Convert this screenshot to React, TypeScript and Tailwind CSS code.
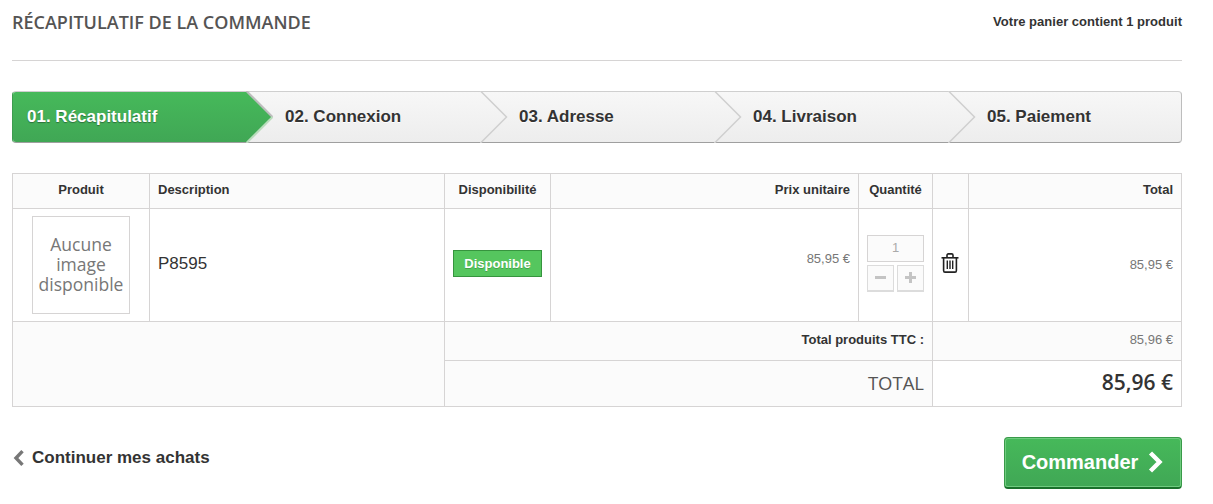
import React from 'react';

const steps = ['01. Récapitulatif', '02. Connexion', '03. Adresse', '04. Livraison', '05. Paiement'];

const th = 'border border-[#d6d4d4] bg-[#fbfbfb] h-[35px] px-2 pb-[2px] text-[13px] font-bold text-[#333]';
const td = 'border border-[#d6d4d4] px-2 align-middle';

function TrashIcon() {
  return (
    <svg width="18" height="20" viewBox="0 0 18 20" fill="none" stroke="#222" strokeWidth="1.6">
      <path d="M0.5 4.8H17.5" />
      <path d="M6 4.5V2.2C6 1.4 6.6 0.9 7.3 0.9H10.7C11.4 0.9 12 1.4 12 2.2V4.5" />
      <path d="M2.6 4.8V17.4C2.6 18.4 3.2 19.1 4 19.1H14C14.8 19.1 15.4 18.4 15.4 17.4V4.8" />
      <path d="M6.3 7.6V16M9 7.6V16M11.7 7.6V16" strokeWidth="1.4" />
    </svg>
  );
}

function StepChevron({ active }: { active: boolean }) {
  return (
    <svg className="absolute top-[-1px] left-[233px] z-10" width="28" height="52" viewBox="0 0 28 52" fill="none">
      {active ? (
        <>
          <path d="M0 0.5L26 26L0 51.5Z" fill="url(#stepGreen)" />
          <path d="M0.5 0L26.5 26" stroke="#bdbdbd" strokeWidth="2" />
          <path d="M26.5 26L0.5 52" stroke="#b9dcbc" strokeWidth="2" />
        </>
      ) : (
        <>
          <path d="M0 0L26 26L0 52Z" fill="url(#stepGrey)" />
          <path d="M0.5 0L26.5 26L0.5 52" stroke="#cfcfcf" strokeWidth="1.5" />
        </>
      )}
      <defs>
        <linearGradient id="stepGreen" x1="0" y1="0" x2="0" y2="1">
          <stop offset="0" stopColor="#46b95a" />
          <stop offset="1" stopColor="#40a755" />
        </linearGradient>
        <linearGradient id="stepGrey" x1="0" y1="0" x2="0" y2="1">
          <stop offset="0" stopColor="#f7f7f7" />
          <stop offset="1" stopColor="#ededed" />
        </linearGradient>
      </defs>
    </svg>
  );
}

export default function App() {
  return (
    <div className="w-[1213px] h-[504px] overflow-hidden bg-white pl-3 pr-[31px] font-['Liberation_Sans',Arial,sans-serif] text-[#333]">
      <div className="flex h-[61px] justify-between border-b border-[#d6d4d4] pt-[10px]">
        <h1 className="font-['Open_Sans',sans-serif] text-[18px] leading-[24px] font-semibold text-[#555454] uppercase">
          Récapitulatif de la commande
        </h1>
        <span className="pt-[3px] text-[13px] leading-[18px] font-bold tracking-[0.02px] text-[#333]">Votre panier contient 1 produit</span>
      </div>

      <ul className="mt-[30px] flex h-[52px] w-[1170px] rounded-[4px] border-x border-t border-b border-t-[#cfcfcf] border-r-[#bdbdbd] border-b-[#9f9f9f] border-l-[#3d9c4f] bg-gradient-to-b from-[#f7f7f7] to-[#ededed]">
        {steps.map((label, i) => (
          <li
            key={label}
            className={
              i === 0
                ? 'relative flex w-[234px] items-center rounded-l-[3px] bg-gradient-to-b from-[#46b95a] to-[#40a755] pl-[14px] text-[17px] font-bold text-white [text-shadow:0_1px_1px_rgba(0,0,0,0.35)]'
                : i === 4
                  ? 'relative flex flex-1 items-center pl-[38px] text-[17px] font-bold text-[#333] [text-shadow:0_1px_0_#fff]'
                  : 'relative flex w-[234px] items-center pl-[38px] text-[17px] font-bold text-[#333] [text-shadow:0_1px_0_#fff]'
            }
          >
            {label}
            {i < 4 && <StepChevron active={i === 0} />}
          </li>
        ))}
      </ul>

      <table className="mt-[30px] w-[1169px] table-fixed border-collapse">
        <colgroup>
          <col className="w-[137px]" />
          <col className="w-[295px]" />
          <col className="w-[106px]" />
          <col className="w-[308px]" />
          <col className="w-[74px]" />
          <col className="w-[36px]" />
          <col className="w-[213px]" />
        </colgroup>
        <thead>
          <tr>
            <th className={`${th} text-center`}>Produit</th>
            <th className={`${th} text-left`}>Description</th>
            <th className={`${th} text-center`}>Disponibilité</th>
            <th className={`${th} text-right`}>Prix unitaire</th>
            <th className={`${th} text-center`}>Quantité</th>
            <th className={th}></th>
            <th className={`${th} text-right`}>Total</th>
          </tr>
        </thead>
        <tbody>
          <tr className="h-[113px]">
            <td className={td}>
              <div className="mx-auto flex h-[98px] w-[98px] items-center justify-center border border-[#d6d4d4] pb-[3px] text-center font-['Open_Sans',sans-serif] text-[17.5px] leading-[20px] text-[#777]">
                Aucune
                <br />
                image
                <br />
                disponible
              </div>
            </td>
            <td className={`${td} pb-[2px] text-[17px] text-[#333]`}>P8595</td>
            <td className={`${td} pb-[4px] text-center`}>
              <span className="inline-block h-[27px] w-[89px] border border-[#36943e] bg-[#55c65e] text-[13px] leading-[25px] font-bold text-white [text-shadow:0_1px_0_rgba(0,0,0,0.2)]">
                Disponible
              </span>
            </td>
            <td className={`${td} pb-[12px] text-right text-[13px] text-[#777]`}>85,95 €</td>
            <td className={`${td} pb-[4px]`}>
              <div className="flex h-[27px] w-[57px] items-center justify-center border border-[#d6d4d4] bg-[#fbfbfb] text-[13px] text-[#aaa]">1</div>
              <div className="mt-[3px] flex w-[57px] justify-between">
                <span className="flex h-[27px] w-[27px] items-center justify-center border border-b-2 border-[#dcdcdc] bg-[#fbfbfb]">
                  <span className="h-[3px] w-[11px] bg-[#c4c4c4]" />
                </span>
                <span className="relative flex h-[27px] w-[27px] items-center justify-center border border-b-2 border-[#dcdcdc] bg-[#fbfbfb]">
                  <span className="h-[3px] w-[11px] bg-[#c4c4c4]" />
                  <span className="absolute h-[11px] w-[3px] bg-[#c4c4c4]" />
                </span>
              </div>
            </td>
            <td className={`${td} !px-0`}>
              <div className="flex justify-center pr-[1px] pb-[4px]">
                <TrashIcon />
              </div>
            </td>
            <td className={`${td} text-right text-[13px] text-[#777]`}>85,95 €</td>
          </tr>
          <tr className="h-[39px]">
            <td colSpan={2} rowSpan={2} className="border border-[#d6d4d4] bg-[#fbfbfb]"></td>
            <td colSpan={3} className={`${td} bg-[#fbfbfb] pb-[2px] text-right text-[13px] font-bold text-[#333]`}>
              Total produits TTC :
            </td>
            <td colSpan={2} className={`${td} bg-[#fbfbfb] pb-[2px] text-right text-[13px] text-[#777]`}>
              85,96 €
            </td>
          </tr>
          <tr className="h-[46px]">
            <td colSpan={3} className={`${td} bg-[#fbfbfb] pb-[2px] text-right font-['Open_Sans',sans-serif] text-[18.5px] text-[#555454]`}>
              TOTAL
            </td>
            <td colSpan={2} className={`${td} pb-[2px] text-right font-['Open_Sans',sans-serif] text-[21px] font-semibold text-[#333]`}>
              85,96 €
            </td>
          </tr>
        </tbody>
      </table>

      <div className="mt-[30px] flex w-[1170px] items-start justify-between">
        <a className="mt-[10px] flex items-center text-[17px] leading-[22px] font-bold text-[#333]">
          <svg className="mr-[8px] ml-[1px]" width="11" height="16" viewBox="0 0 11 16" fill="none" stroke="#777" strokeWidth="3.4">
            <path d="M9.5 1.2L3 8L9.5 14.8" />
          </svg>
          Continuer mes achats
        </a>
        <button className="flex h-[52px] w-[178px] items-center justify-center gap-[10px] rounded-[4px] border border-b-2 border-[#399a49] border-b-[#19702b] bg-gradient-to-b from-[#46b95a] to-[#40a755] pb-[2px] text-[20px] font-bold text-white shadow-[inset_0_0_0_1px_#6fcb7f]">
          Commander
          <svg width="16" height="22" viewBox="0 0 16 22" fill="none" stroke="#fff" strokeWidth="4.4">
            <path d="M2.5 2L11.5 11L2.5 20" />
          </svg>
        </button>
      </div>
    </div>
  );
}
